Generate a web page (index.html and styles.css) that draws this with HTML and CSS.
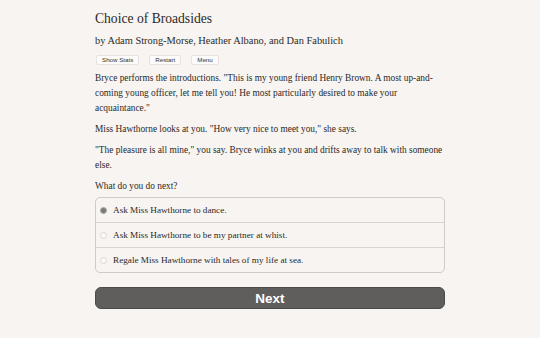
FILE: index.html
```html
<!DOCTYPE html>
<html lang="en">

<head>
    <meta charset="UTF-8">
    <title>Choice of Broadsides</title>
    <link rel="stylesheet" href="styles.css">
</head>

<body>
    <div class="container">
        <h1 class="title">Choice of Broadsides</h1>
        <h2 class="byline">by Adam Strong-Morse, Heather Albano, and Dan Fabulich</h2>

        <div class="buttons">
            <button class="small-btn">Show Stats</button>
            <button class="small-btn">Restart</button>
            <button class="small-btn">Menu</button>
        </div>

        <div class="text">
            <p>Bryce performs the introductions. "This is my young friend Henry Brown. A most up-and-coming young officer, let me tell you! He most particularly desired to make your acquaintance."</p>
            <p>Miss Hawthorne looks at you. "How very nice to meet you," she says.</p>
            <p>"The pleasure is all mine," you say. Bryce winks at you and drifts away to talk with someone else.</p>
            <p>What do you do next?</p>
        </div>

        <div class="choices">
            <label class="choice selected"><span class="radio"></span>Ask Miss Hawthorne to dance.</label>
            <label class="choice"><span class="radio"></span>Ask Miss Hawthorne to be my partner at whist.</label>
            <label class="choice"><span class="radio"></span>Regale Miss Hawthorne with tales of my life at sea.</label>
        </div>

        <button class="next">Next</button>
    </div>
</body>

</html>
```

FILE: styles.css
```css
body {
    margin: 0;
    background-color: #f7f4f1;
    color: #2b2a28;
    font-family: "Liberation Serif", serif;
}

.container {
    width: 350px;
    margin: 0 auto;
    padding-top: 9px;
}

.title {
    font-size: 13.6px;
    font-weight: normal;
    margin: 0;
    line-height: 20px;
}

.byline {
    font-size: 10.4px;
    font-weight: normal;
    margin: 4px 0 0 0;
    line-height: 16px;
}

.buttons {
    display: flex;
    gap: 10px;
    margin-top: 6px;
    padding-left: 1px;
}

.small-btn {
    font-family: "Liberation Sans", sans-serif;
    font-size: 6.2px;
    padding: 0 5px;
    height: 10px;
    line-height: 8px;
    background-color: #fcfbfa;
    border: 1px solid #e6e3e0;
    border-radius: 2px;
    color: #333;
}

.text {
    font-size: 9.35px;
    line-height: 15px;
    margin-top: 6px;
}

.text p {
    margin: 0 0 6px 0;
}

.text p:last-child {
    margin-bottom: 0;
}

.choices {
    border: 1px solid #cfcbc7;
    border-radius: 5px;
    margin-top: 3px;
}

.choice {
    display: flex;
    align-items: center;
    height: 25px;
    font-size: 9.2px;
    padding-left: 4px;
    border-top: 1px solid #d8d4d0;
    box-sizing: border-box;
}

.choice:first-child {
    border-top: none;
    height: 24px;
}

.radio {
    width: 5px;
    height: 5px;
    border: 1px solid #dcd9d6;
    border-radius: 50%;
    background-color: #fbfaf9;
    margin-right: 6px;
}

.choice.selected .radio {
    background-color: #7d7b79;
    border-color: #a9a7a4;
}

.next {
    display: block;
    width: 100%;
    height: 22px;
    margin-top: 14px;
    background-color: #5f5e5c;
    border: 1px solid #4c4b49;
    border-radius: 6px;
    color: #fff;
    font-family: "Liberation Sans", sans-serif;
    font-weight: bold;
    font-size: 13.5px;
}
```
